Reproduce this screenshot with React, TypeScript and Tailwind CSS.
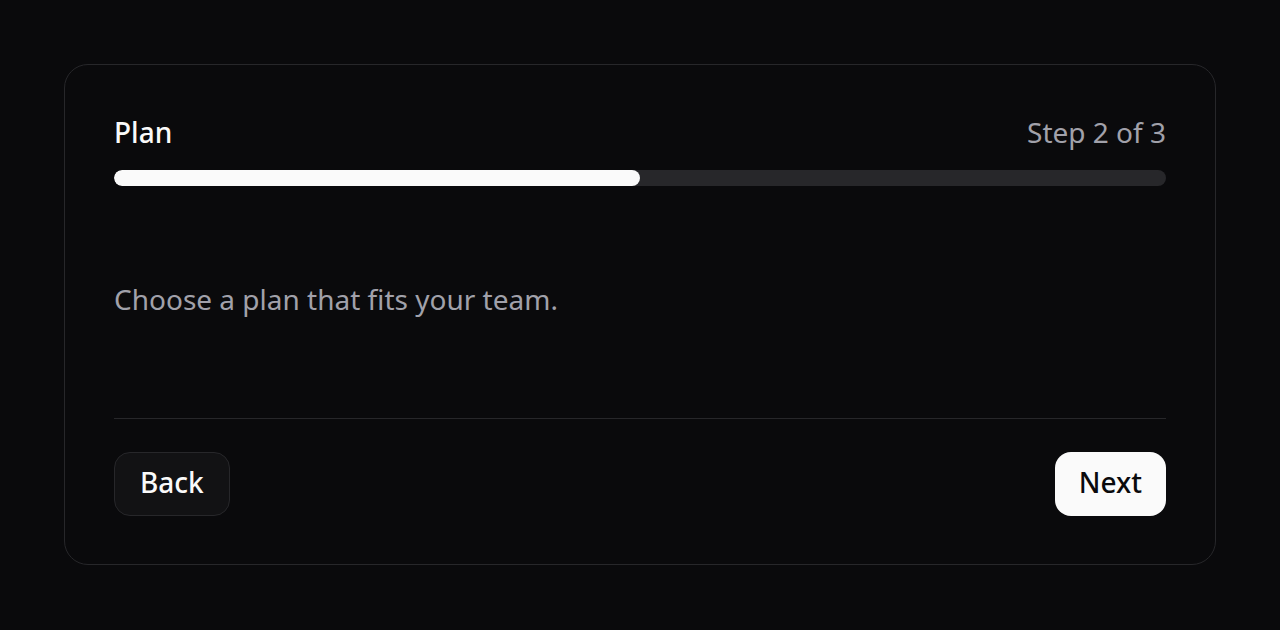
export default function App() {
  const step = 2
  const total = 3
  const progress = 50

  return (
    <div
      className="min-h-[630px] w-full bg-[#0a0a0c] p-16"
      style={{ fontFamily: '"Noto Sans", "Open Sans", sans-serif' }}
    >
      <div className="rounded-3xl border border-[#27272a] bg-[#0a0a0c] px-[49px] pt-[48px] pb-[48px]">
        {/* Header */}
        <div className="flex items-center justify-between leading-[38px]">
          <h2 className="text-[28px] font-medium text-[#fafafa]">Plan</h2>
          <span className="text-[28px] text-[#a1a1aa]">
            Step {step} of {total}
          </span>
        </div>

        {/* Progress */}
        <div className="mt-[19px] h-4 w-full overflow-hidden rounded-full bg-[#27272a]">
          <div className="h-full rounded-full bg-[#fafafa]" style={{ width: `${progress}%` }} />
        </div>

        {/* Body */}
        <div className="pt-[94px] pb-[100px]">
          <p className="text-[28px] leading-[38px] text-[#a1a1aa]">Choose a plan that fits your team.</p>
        </div>

        {/* Footer */}
        <div className="flex items-center justify-between border-t border-[#27272a] pt-[33px]">
          <button className="h-16 rounded-2xl border border-[#27272a] bg-[#121214] px-[25px] pb-[4px] text-[28px] leading-[38px] font-medium text-[#fafafa]">
            Back
          </button>
          <button className="h-16 rounded-2xl bg-[#fafafa] px-[24px] pb-[4px] text-[28px] leading-[38px] font-medium text-[#0a0a0c]">
            Next
          </button>
        </div>
      </div>
    </div>
  )
}
